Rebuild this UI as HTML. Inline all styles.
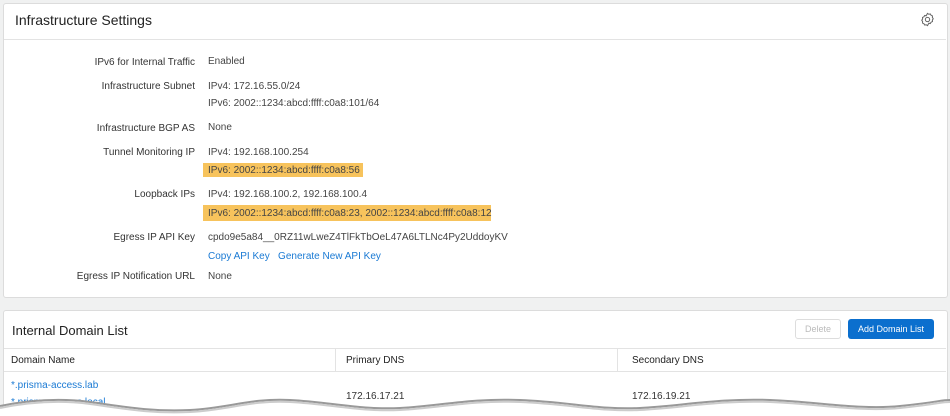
<!DOCTYPE html>
<html><head><style>
html,body{margin:0;width:950px;height:416px;overflow:hidden}
body{background:#f0f1f1;font-family:"Liberation Sans",sans-serif;position:relative;color:#333}
.card{position:absolute;left:3px;width:943px;background:#fff;border:1px solid #dcdcdc;border-radius:3px}
.t{position:absolute;font-size:10px;white-space:nowrap;line-height:12px}
.l{right:755px;text-align:right;color:#333}
.v{left:208px;color:#444}
.hl{position:absolute;background:#f7c35c}
a{color:#1a7ad4}
.h{font-size:14px;color:#222}
</style></head><body>
<div class="card" style="top:3px;height:293px"></div>
<div style="position:absolute;left:4px;top:39px;width:942px;height:1px;background:#e3e3e3"></div>
<div class="t h" style="left:15px;top:14px">Infrastructure Settings</div>
<svg style="position:absolute;left:920px;top:12px" width="15" height="15" viewBox="0 0 16 16"><path d="M8 1.5l1.4.9 1.6-.3.8 1.4 1.5.7-.1 1.6.9 1.4-.9 1.4.1 1.6-1.5.7-.8 1.4-1.6-.3L8 14.5l-1.4-.9-1.6.3-.8-1.4-1.5-.7.1-1.6L1.9 8.8 2.8 7.4 2.7 5.8l1.5-.7.8-1.4 1.6.3z" fill="none" stroke="#666" stroke-width="1.1"/><circle cx="8" cy="8" r="2.3" fill="none" stroke="#666" stroke-width="1.1"/></svg>

<div class="hl" style="left:203px;top:163px;width:160px;height:14px"></div>
<div class="hl" style="left:203px;top:205px;width:288px;height:16px"></div>

<div class="t l" style="top:57px">IPv6 for Internal Traffic</div><div class="t v" style="top:56px">Enabled</div>
<div class="t l" style="top:81px">Infrastructure Subnet</div><div class="t v" style="top:81px">IPv4: 172.16.55.0/24</div>
<div class="t v" style="top:98px">IPv6: 2002::1234:abcd:ffff:c0a8:101/64</div>
<div class="t l" style="top:123px">Infrastructure BGP AS</div><div class="t v" style="top:122px">None</div>
<div class="t l" style="top:147px">Tunnel Monitoring IP</div><div class="t v" style="top:147px">IPv4: 192.168.100.254</div>
<div class="t v" style="top:165px">IPv6: 2002::1234:abcd:ffff:c0a8:56</div>
<div class="t l" style="top:189px">Loopback IPs</div><div class="t v" style="top:189px">IPv4: 192.168.100.2, 192.168.100.4</div>
<div class="t v" style="top:208px">IPv6: 2002::1234:abcd:ffff:c0a8:23, 2002::1234:abcd:ffff:c0a8:12</div>
<div class="t l" style="top:232px">Egress IP API Key</div><div class="t v" style="top:232px">cpdo9e5a84__0RZ11wLweZ4TlFkTbOeL47A6LTLNc4Py2UddoyKV</div>
<div class="t v" style="top:251px"><a>Copy API Key</a>&nbsp;&nbsp;&nbsp;<a>Generate New API Key</a></div>
<div class="t l" style="top:271px">Egress IP Notification URL</div><div class="t v" style="top:271px">None</div>

<div class="card" style="top:310px;height:120px"></div>
<div class="t h" style="left:12px;top:325px;font-size:13px">Internal Domain List</div>
<div style="position:absolute;left:795px;top:319px;width:44px;height:18px;border:1px solid #ddd;border-radius:3px;font-size:9px;color:#bbb;text-align:center;line-height:18px">Delete</div>
<div style="position:absolute;left:848px;top:319px;width:86px;height:20px;background:#0b6fce;border-radius:3px;font-size:9px;color:#fff;text-align:center;line-height:20px">Add Domain List</div>
<div style="position:absolute;left:4px;top:348px;width:942px;height:1px;background:#e3e3e3"></div>
<div style="position:absolute;left:4px;top:371px;width:942px;height:1px;background:#e3e3e3"></div>
<div style="position:absolute;left:335px;top:348px;width:1px;height:24px;background:#e3e3e3"></div>
<div style="position:absolute;left:617px;top:348px;width:1px;height:24px;background:#e3e3e3"></div>
<div class="t" style="left:11px;top:355px;color:#222">Domain Name</div>
<div class="t" style="left:346px;top:355px;color:#222">Primary DNS</div>
<div class="t" style="left:632px;top:355px;color:#222">Secondary DNS</div>
<div class="t" style="left:11px;top:380px"><a>*.prisma-access.lab</a></div>
<div class="t" style="left:11px;top:397px"><a>*.prisma-access.local</a></div>
<div class="t" style="left:346px;top:391px">172.16.17.21</div>
<div class="t" style="left:632px;top:391px">172.16.19.21</div>
<svg style="position:absolute;left:0;top:392px" width="950" height="24">
<path d="M0 14 C30 8 60 6 90 10 S150 20 190 18 S250 6 290 8 S360 18 400 16 S470 6 520 8 S600 18 640 16 S720 6 770 8 S860 18 900 14 S940 8 950 8 L950 24 L0 24Z" fill="#fff"/>
<path d="M0 14 C30 8 60 6 90 10 S150 20 190 18 S250 6 290 8 S360 18 400 16 S470 6 520 8 S600 18 640 16 S720 6 770 8 S860 18 900 14 S940 8 950 8" fill="none" stroke="#999" stroke-width="2"/>
<path d="M0 16 C30 10 60 8 90 12 S150 22 190 20 S250 8 290 10 S360 20 400 18 S470 8 520 10 S600 20 640 18 S720 8 770 10 S860 20 900 16 S940 10 950 10" fill="none" stroke="#ccc" stroke-width="2"/>
</svg>
</body></html>
